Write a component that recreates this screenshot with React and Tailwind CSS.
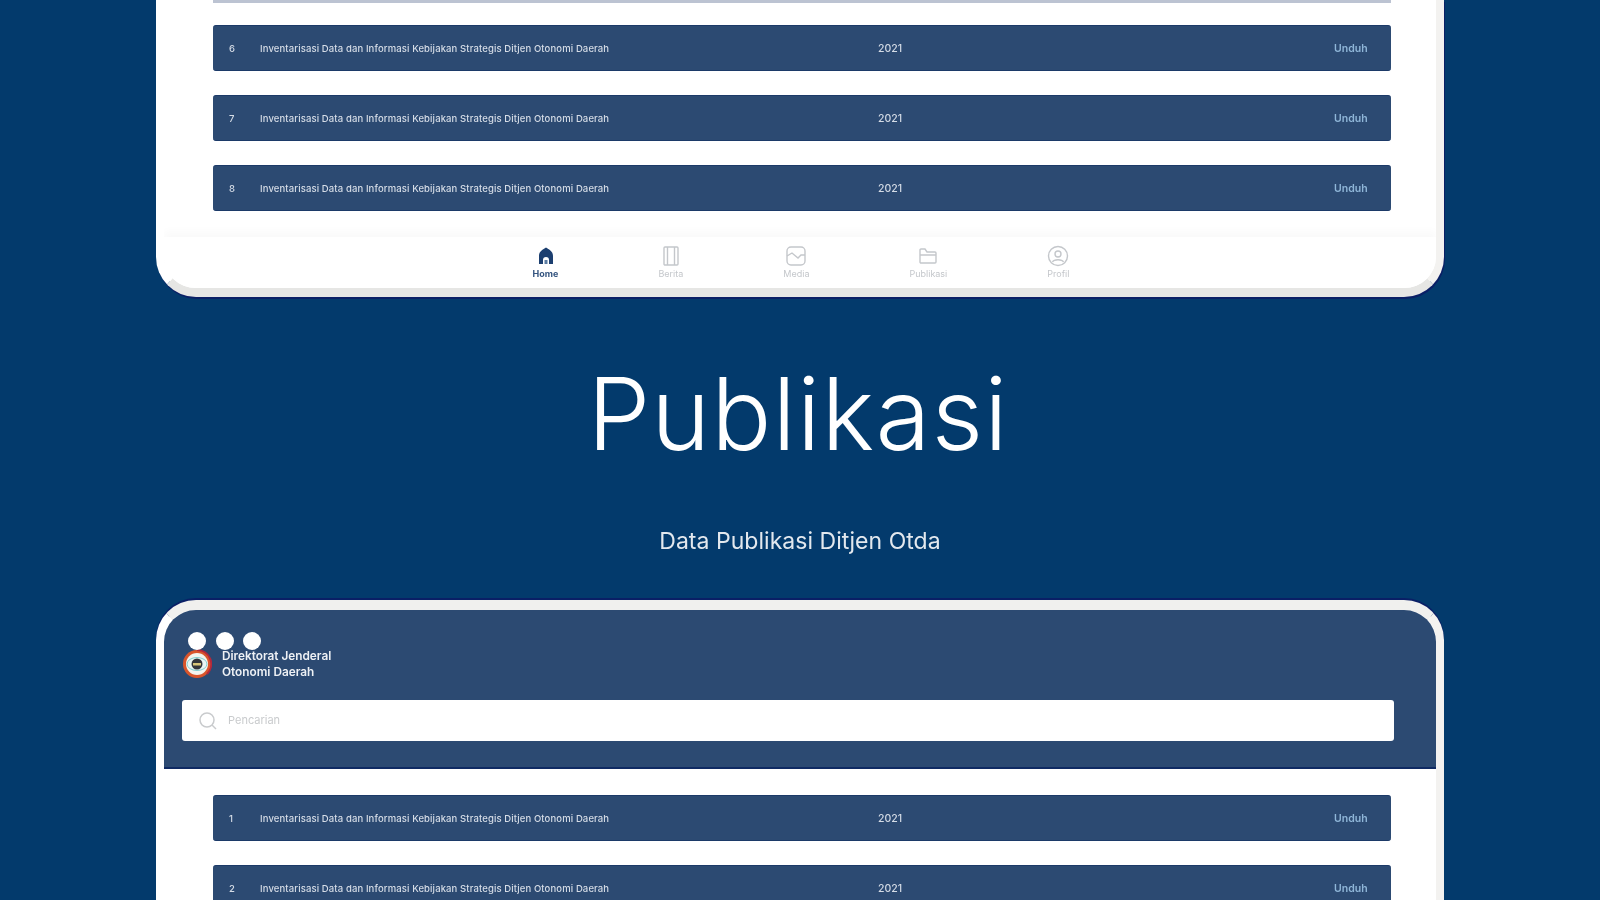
const TITLE = "Inventarisasi Data dan Informasi Kebijakan Strategis Ditjen Otonomi Daerah";

function Row({ n }) {
  return (
    <div className="h-[46px] shrink-0 rounded-[3px] bg-[#2c4a72] border-y border-[#1c3a68] pt-[2px] flex items-center text-[9.5px] font-medium text-[#d5dce6]">
      <span className="w-[47px] pl-[16px] shrink-0 blur-[0.4px]">{n}</span>
      <span className="w-[618px] shrink-0 tracking-[0.12px] whitespace-nowrap blur-[0.4px]">{TITLE}</span>
      <span className="w-[456px] shrink-0 text-[10.5px] blur-[0.4px]">2021</span>
      <span className="text-[#8fb6d8] font-semibold text-[10.5px] blur-[0.4px]">Unduh</span>
    </div>
  );
}

const NAV = [
  {
    label: "Home",
    active: true,
    icon: (
      <svg width="20" height="20" viewBox="0 0 20 20" fill="#1c3f70">
        <path d="M10 1.5 C13 3.5 17 5 17 10 V18 H13 V14 A3 3 0 0 0 7 14 V18 H3 V10 C3 5 7 3.5 10 1.5Z" />
        <rect x="8.5" y="14" width="3" height="4" fill="#5d7ea3" />
      </svg>
    ),
  },
  {
    label: "Berita",
    icon: (
      <svg width="20" height="20" viewBox="0 0 20 20" fill="none" stroke="#c4c7cb" strokeWidth="1.4">
        <rect x="3" y="1" width="14" height="18" rx="1" />
        <path d="M6.5 1v18M13.5 1v18" />
      </svg>
    ),
  },
  {
    label: "Media",
    icon: (
      <svg width="22" height="22" viewBox="0 0 22 22" fill="none" stroke="#c4c7cb" strokeWidth="1.4">
        <rect x="2" y="2" width="18" height="18" rx="4" />
        <path d="M2 11l5-3 6 5 3-3h4" />
      </svg>
    ),
  },
  {
    label: "Publikasi",
    icon: (
      <svg width="20" height="20" viewBox="0 0 20 20" fill="none" stroke="#c4c7cb" strokeWidth="1.4">
        <path d="M2 4a1 1 0 0 1 1-1h4l2 3h8a1 1 0 0 1 1 1v9a1 1 0 0 1-1 1H3a1 1 0 0 1-1-1Z" />
        <path d="M2 9h16" />
      </svg>
    ),
  },
  {
    label: "Profil",
    icon: (
      <svg width="22" height="22" viewBox="0 0 22 22" fill="none" stroke="#c4c7cb" strokeWidth="1.4">
        <circle cx="11" cy="11" r="9.5" />
        <circle cx="11" cy="9" r="3" />
        <path d="M5.5 17c1.5-3 9.5-3 11 0" />
      </svg>
    ),
  },
];

function BottomNav() {
  return (
    <div className="h-[51px] shrink-0 flex justify-center gap-[100px] pt-[7px] pl-[2px] bg-white shadow-[0_-6px_8px_rgba(0,0,0,0.025)]">
      {NAV.map((item) => (
        <div key={item.label} className="flex flex-col items-center">
          <div className="h-[24px] flex items-center justify-center">{item.icon}</div>
          <span className={`text-[9px] leading-[12px] blur-[0.3px] ${item.active ? "font-bold text-[#34547f]" : "text-[#c4c7cb]"}`}>
            {item.label}
          </span>
        </div>
      ))}
    </div>
  );
}

function Logo() {
  return (
    <svg width="30" height="30" viewBox="0 0 30 30" className="shrink-0">
      <circle cx="15" cy="15" r="14" fill="#d9552b" />
      <path d="M15 1a14 14 0 0 1 10 24" fill="none" stroke="#b3283c" strokeWidth="2" />
      <circle cx="15" cy="15" r="11" fill="#f4f4ee" />
      <ellipse cx="15" cy="15" rx="10" ry="6.5" fill="#eaf6f4" stroke="#7fcfd0" strokeWidth="1" />
      <circle cx="15" cy="15" r="5.5" fill="#33363a" />
      <rect x="11" y="14" width="8" height="2.5" fill="#d8c679" />
    </svg>
  );
}

export default function App() {
  return (
    <div className="h-[900px] overflow-hidden bg-[#033a6c]" style={{ fontFamily: "Inter, 'Noto Sans', sans-serif" }}>
      <div className="h-[900px] flex flex-col items-center blur-[0.5px]">
        <div className="w-[1288px] h-[297px] shrink-0 bg-white border-l-[8px] border-r-[8px] border-b-[9px] border-l-white border-r-[#f3f2f0] border-b-[#e6e6e4] rounded-b-[40px] shadow-[1px_2px_0_#0a1f66] flex flex-col overflow-hidden">
          <div className="h-[237px] shrink-0 flex flex-col gap-[24px] pl-[49px] pr-[45px]">
            <div className="h-[3px] shrink-0 bg-[#bcc3d2] -mb-[2px]" />
            <Row n="6" />
            <Row n="7" />
            <Row n="8" />
          </div>
          <BottomNav />
        </div>

        <div className="h-[303px] w-full shrink-0 flex flex-col items-center text-white">
          <h1 className="mt-[55px] pr-[4px] text-[100px] leading-[124px] font-light tracking-[1.1px]">Publikasi</h1>
          <p className="mt-[50px] text-[23px] leading-[30px] text-[#e3e8ee] tracking-[0.03px]">Data Publikasi Ditjen Otda</p>
        </div>

        <div className="relative w-[1288px] flex-1 bg-white border-l-[8px] border-r-[8px] border-t-[10px] border-l-white border-r-[#f3f2f0] border-t-[#f0f0ee] rounded-t-[40px] shadow-[0_-2px_0_#0a1f66] flex flex-col">
          <div className="absolute left-[24px] top-[22px] flex gap-[9.5px]">
            <span className="w-[18px] h-[18px] rounded-full bg-white" />
            <span className="w-[18px] h-[18px] rounded-full bg-white" />
            <span className="w-[18px] h-[18px] rounded-full bg-white" />
          </div>
          <div className="h-[159px] shrink-0 bg-[#2c4a72] border-b-2 border-[#0f2a63] rounded-t-[32px] pl-[18px] pt-[39px]">
            <div className="flex items-center gap-[10px] h-[30px]">
              <Logo />
              <div className="text-[11.8px] leading-[16px] font-semibold text-[#eef1f5] whitespace-nowrap blur-[0.3px]">
                <div>Direktorat Jenderal</div>
                <div>Otonomi Daerah</div>
              </div>
            </div>
            <div className="mt-[21px] w-[1212px] h-[41px] rounded-[3px] bg-white flex items-center pl-[16px] gap-[10px]">
              <svg width="20" height="20" viewBox="0 0 20 20" fill="none" stroke="#c9cbcd" strokeWidth="1.5">
                <circle cx="9" cy="9" r="7" />
                <path d="M14 14l4 4" />
              </svg>
              <span className="text-[11px] text-[#c9cbcd] blur-[0.3px]">Pencarian</span>
            </div>
          </div>
          <div className="flex flex-col gap-[24px] pl-[49px] pr-[45px] pt-[26px]">
            <Row n="1" />
            <Row n="2" />
          </div>
        </div>
      </div>
    </div>
  );
}
